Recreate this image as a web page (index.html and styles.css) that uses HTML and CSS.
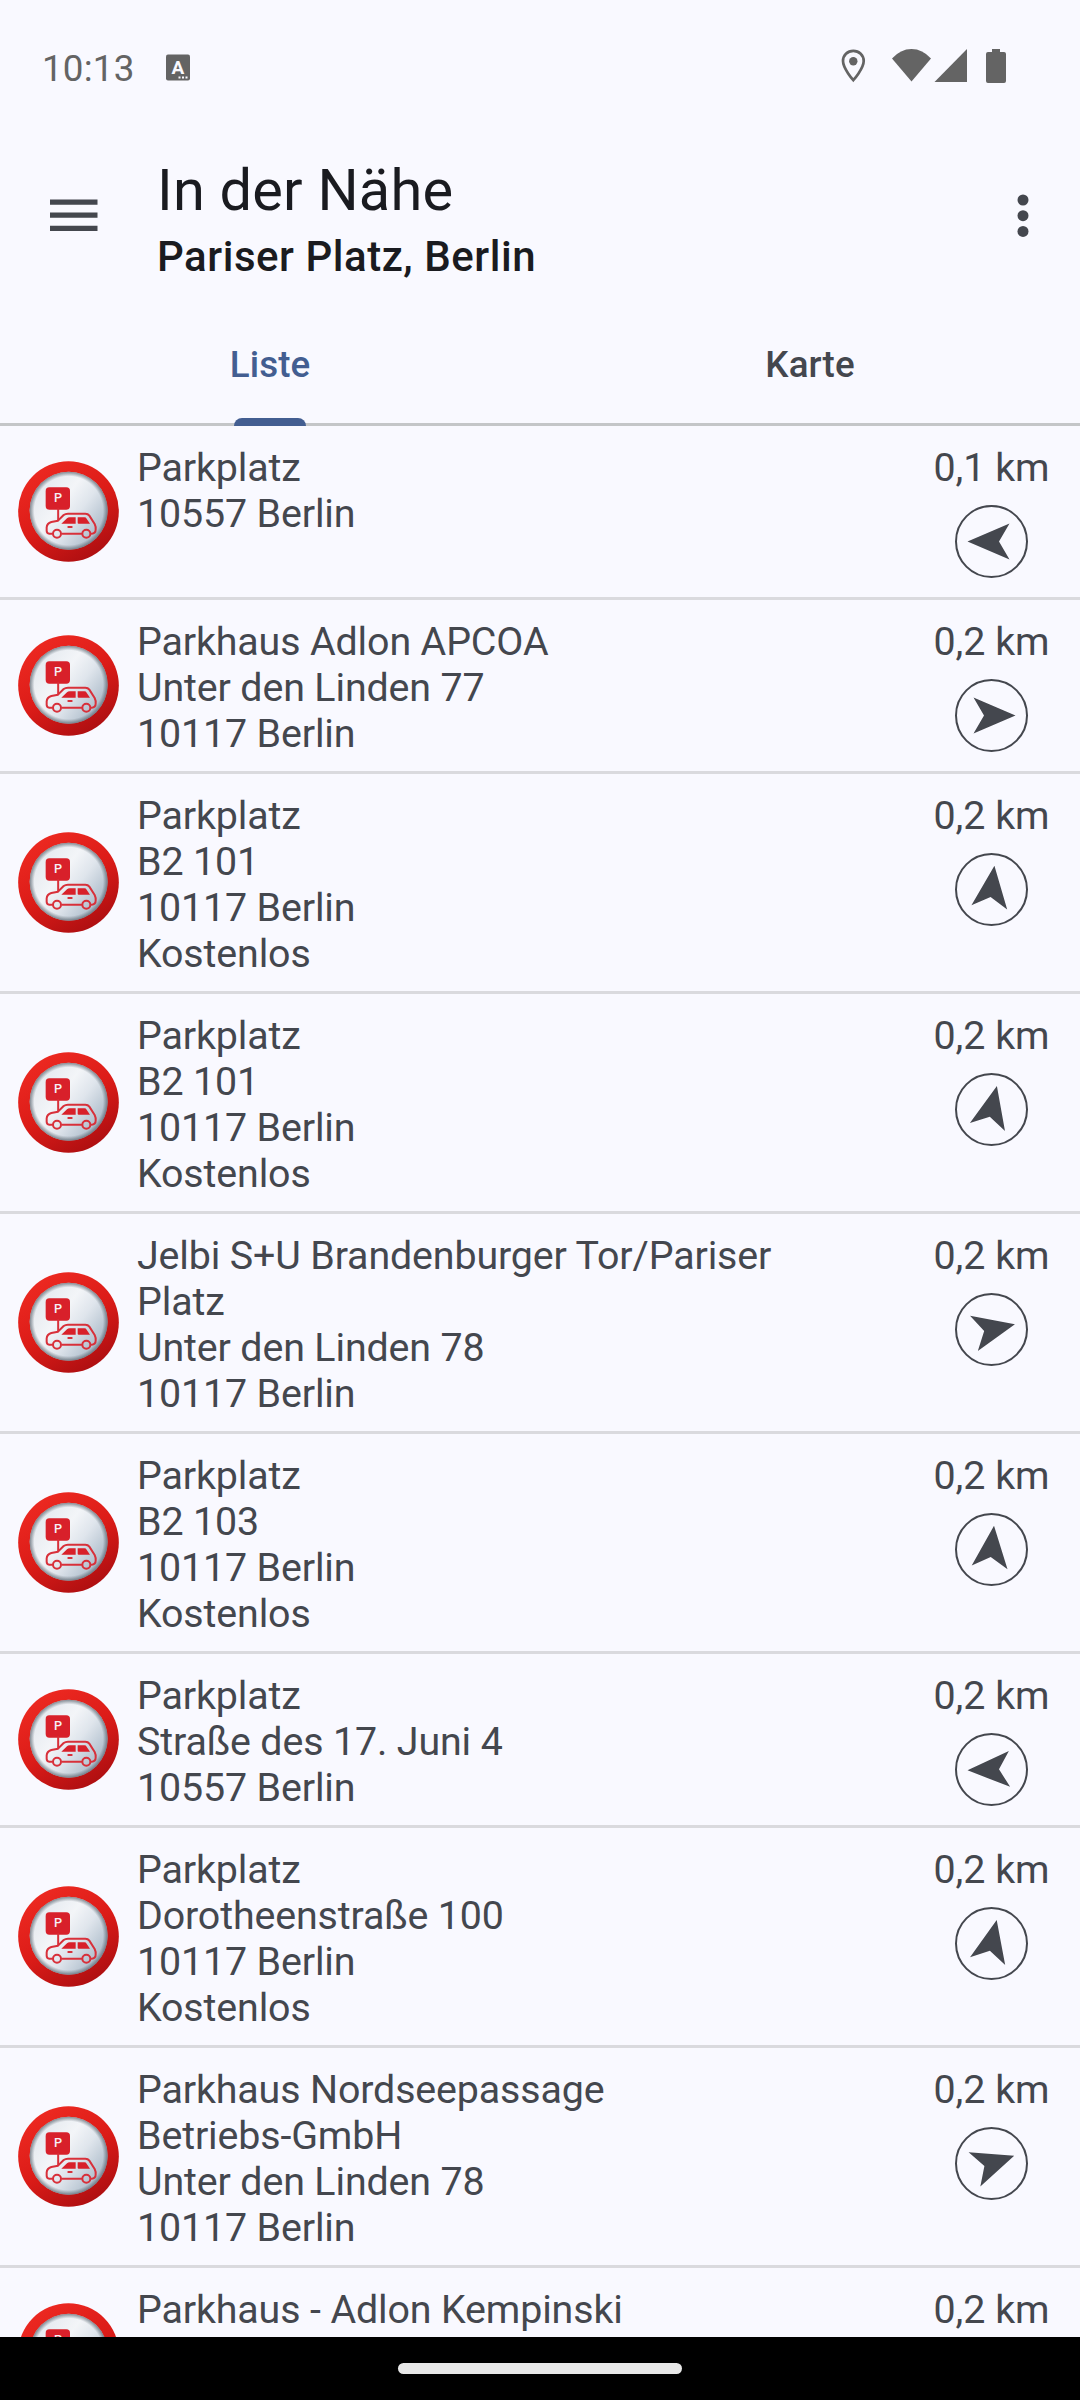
FILE: index.html
```html
<!DOCTYPE html>
<html lang="de">
<head>
<meta charset="utf-8">
<title>In der Nähe</title>
<link rel="stylesheet" href="styles.css">
</head>
<body>
<svg class="defs" width="0" height="0" aria-hidden="true">
  <defs>
    <linearGradient id="ring" x1="0.2" y1="0" x2="0.8" y2="1">
      <stop offset="0" stop-color="#ee2a22"/>
      <stop offset="0.5" stop-color="#dc1c18"/>
      <stop offset="1" stop-color="#a80d10"/>
    </linearGradient>
    <linearGradient id="face" x1="0.1" y1="0.15" x2="0.9" y2="0.75">
      <stop offset="0" stop-color="#e3e8ee"/>
      <stop offset="0.4" stop-color="#f3f5f8"/>
      <stop offset="0.65" stop-color="#dfe5ec"/>
      <stop offset="1" stop-color="#aebdcb"/>
    </linearGradient>
    <radialGradient id="shade">
      <stop offset="0.88" stop-color="#5b6670" stop-opacity="0"/>
      <stop offset="1" stop-color="#5b6670" stop-opacity="0.75"/>
    </radialGradient>
    <symbol id="parking" viewBox="54 63 303 303">
      <circle cx="205.500" cy="214.500" r="151" fill="url(#ring)"/>
      <circle cx="206" cy="212" r="117" fill="url(#face)"/>
      <circle cx="206" cy="212" r="117" fill="url(#shade)"/>
      <rect x="137" y="142" width="73" height="67" rx="11" fill="#d8202a"/>
      <text x="174" y="187" class="sign-letter">P</text>
      <g fill="none" stroke="#d8303a" stroke-width="6" stroke-linejoin="round" stroke-linecap="round">
        <path d="M174.500 208V241"/>
        <path d="M156 281H148Q140 280 140 272V262Q141 250 154 246L174 242L191 225Q196 221 204 221H256Q264 221 268 227L284 252Q288 260 287 269Q287 280 275 281"/>
        <path d="M187 281H244"/>
        <circle cx="171" cy="281" r="12"/>
        <circle cx="259" cy="281" r="12"/>
        <path d="M205 261H215"/>
      </g>
      <path d="M184 251L201 235Q204 232 209 232H227V251ZM233 232H253Q258 232 260 236L270 251H236Q233 251 233 248Z" fill="#d8202a"/>
    </symbol>
    <symbol id="arrow" viewBox="-36.500 -36.500 73 73">
      <path d="M0 -24L18 18L0 7.500L-18 18Z" fill="#44474e"/>
    </symbol>
  </defs>
</svg>

<div class="screen">
  <div class="status">
    <span class="clock">10:13</span>
    <svg class="badge" width="24" height="27" viewBox="0 0 24 27">
      <rect x="0" y="0.500" width="24" height="26" rx="2" fill="#646464"/>
      <text x="12" y="19.500" class="badge-letter">A</text>
      <path d="M12.500 22.500h2v2h-2zM16 22.500h2v2h-2zM19.500 22.500h2v2h-2z" fill="#f9f9ff"/>
    </svg>
    <svg class="system" width="166" height="36" viewBox="841 48 166 36">
      <path d="M853.300 50.900C847.500 50.900 843 55.300 843 61C843 68.500 853.300 80.200 853.300 80.200S863.700 68.500 863.700 61C863.700 55.300 859.100 50.900 853.300 50.900Z" fill="none" stroke="#646464" stroke-width="2.700"/>
      <circle cx="853.300" cy="61.300" r="4.200" fill="#646464"/>
      <path d="M892 58.500Q900.500 49 911.500 49T931 58.500L911.500 81.500Z" fill="#646464"/>
      <path d="M967 49V82H934.500Z" fill="#646464"/>
      <path d="M992 49H1000V52H1004Q1006 52 1006 54V81Q1006 83 1004 83H988Q986 83 986 81V54Q986 52 988 52H992Z" fill="#646464"/>
    </svg>
  </div>

  <header class="appbar">
    <svg class="menu" width="48" height="33" viewBox="0 0 48 33">
      <path d="M0 0.500h47.500v5.250H0zM0 13.600h47.500v5.250H0zM0 26.700h47.500v5.250H0z" fill="#44474e"/>
    </svg>
    <div class="titles">
      <h1>In der Nähe</h1>
      <h2>Pariser Platz, Berlin</h2>
    </div>
    <svg class="more" width="12" height="44" viewBox="0 0 12 44">
      <g fill="#44474e"><circle cx="6" cy="6" r="5.500"/><circle cx="6" cy="21.700" r="5.500"/><circle cx="6" cy="37.400" r="5.500"/></g>
    </svg>
  </header>

  <nav class="tabs">
    <div class="tab active"><span>Liste</span></div>
    <div class="tab"><span>Karte</span></div>
  </nav>

  <main class="list">
    <div class="row"><svg class="icon"><use href="#parking"/></svg><p class="text">Parkplatz<br>10557 Berlin</p><div class="distance"><span>0,1 km</span><div class="compass"><svg style="transform:rotate(-90deg)"><use href="#arrow"/></svg></div></div></div>
    <div class="row"><svg class="icon"><use href="#parking"/></svg><p class="text">Parkhaus Adlon APCOA<br>Unter den Linden 77<br>10117 Berlin</p><div class="distance"><span>0,2 km</span><div class="compass"><svg style="transform:rotate(90deg)"><use href="#arrow"/></svg></div></div></div>
    <div class="row"><svg class="icon"><use href="#parking"/></svg><p class="text">Parkplatz<br>B2 101<br>10117 Berlin<br>Kostenlos</p><div class="distance"><span>0,2 km</span><div class="compass"><svg style="transform:rotate(7deg)"><use href="#arrow"/></svg></div></div></div>
    <div class="row"><svg class="icon"><use href="#parking"/></svg><p class="text">Parkplatz<br>B2 101<br>10117 Berlin<br>Kostenlos</p><div class="distance"><span>0,2 km</span><div class="compass"><svg style="transform:rotate(13deg)"><use href="#arrow"/></svg></div></div></div>
    <div class="row"><svg class="icon"><use href="#parking"/></svg><p class="text">Jelbi S+U Brandenburger Tor/Pariser<br>Platz<br>Unter den Linden 78<br>10117 Berlin</p><div class="distance"><span>0,2 km</span><div class="compass"><svg style="transform:rotate(77.500deg)"><use href="#arrow"/></svg></div></div></div>
    <div class="row"><svg class="icon"><use href="#parking"/></svg><p class="text">Parkplatz<br>B2 103<br>10117 Berlin<br>Kostenlos</p><div class="distance"><span>0,2 km</span><div class="compass"><svg style="transform:rotate(6deg)"><use href="#arrow"/></svg></div></div></div>
    <div class="row"><svg class="icon"><use href="#parking"/></svg><p class="text">Parkplatz<br>Straße des 17. Juni 4<br>10557 Berlin</p><div class="distance"><span>0,2 km</span><div class="compass"><svg style="transform:rotate(-92deg)"><use href="#arrow"/></svg></div></div></div>
    <div class="row"><svg class="icon"><use href="#parking"/></svg><p class="text">Parkplatz<br>Dorotheenstraße 100<br>10117 Berlin<br>Kostenlos</p><div class="distance"><span>0,2 km</span><div class="compass"><svg style="transform:rotate(12.500deg)"><use href="#arrow"/></svg></div></div></div>
    <div class="row"><svg class="icon"><use href="#parking"/></svg><p class="text">Parkhaus Nordseepassage<br>Betriebs-GmbH<br>Unter den Linden 78<br>10117 Berlin</p><div class="distance"><span>0,2 km</span><div class="compass"><svg style="transform:rotate(71deg)"><use href="#arrow"/></svg></div></div></div>
    <div class="row"><svg class="icon"><use href="#parking"/></svg><p class="text">Parkhaus - Adlon Kempinski</p><div class="distance"><span>0,2 km</span></div></div>
  </main>

  <footer class="navbar"><div class="pill"></div></footer>
</div>
</body>
</html>
```
FILE: styles.css
```css
* { box-sizing: border-box; }
body { margin: 0; background: #f9f9ff; font-family: Roboto, sans-serif; color: #44474e; }
h1, h2, p { margin: 0; }
.defs { display: block; }
.screen { width: 1080px; height: 2400px; display: flex; flex-direction: column; overflow: hidden; }

.status { height: 136px; padding: 0 73px 4px 42px; display: flex; align-items: center; flex: none; color: #646464; }
.clock { font-size: 36.75px; letter-spacing: 0.2px; width: 124px; line-height: 44px; margin-top: 5px; }
.badge { display: block; margin-top: 2px; }
.badge-letter { font: 700 19px Roboto, sans-serif; fill: #f9f9ff; text-anchor: middle; }
.system { margin-left: auto; }

.appbar { height: 158px; padding: 20px 51px 0 50px; display: flex; align-items: flex-start; flex: none; color: #1a1b20; }
.menu { margin-top: 43px; }
.titles { margin-left: 59px; }
h1 { font-size: 57.75px; font-weight: 400; line-height: 68px; letter-spacing: 0.2px; }
h2 { font-size: 42px; font-weight: 500; line-height: 50px; margin-top: 8px; letter-spacing: 0.53px; }
.more { margin: 38px 0 0 auto; }

.tabs { height: 132px; display: flex; flex: none; border-bottom: 3px solid #c4c6c8; }
.tab { flex: 1; display: flex; justify-content: center; position: relative; padding-top: 49px; font-size: 36.75px; font-weight: 500; line-height: 44px; letter-spacing: 0.1px; }
.active { color: #435e91; }
.active::after { content: ""; position: absolute; left: 234px; bottom: -3px; width: 72px; height: 8px; border-radius: 8px 8px 0 0; background: #435e91; }

.list { flex: 1; min-height: 0; overflow: hidden; }
.row { min-height: 174px; padding: 19px 29px 14px 18px; border-bottom: 3px solid #dadade; display: flex; align-items: center; }
.icon { width: 101px; height: 101px; flex: none; margin-top: -5px; }
.sign-letter { font: 500 38px Roboto, sans-serif; fill: #f6f1f4; text-anchor: middle; }
.text { align-self: flex-start; margin-left: 18px; flex: 1; font-size: 39.375px; line-height: 46px; letter-spacing: -0.13px; }
.distance { align-self: flex-start; width: 119px; font-size: 39.375px; line-height: 46px; display: flex; flex-direction: column; align-items: center; white-space: nowrap; }
.compass { width: 73px; height: 73px; margin-top: 14px; margin-bottom: -10px; border: 2px solid #44474e; border-radius: 50%; display: flex; align-items: center; justify-content: center; }
.compass svg { width: 73px; height: 73px; flex: none; }

.navbar { height: 63px; flex: none; background: #000; display: flex; justify-content: center; padding-top: 26px; }
.pill { width: 284px; height: 11px; border-radius: 6px; background: #e8e8e8; }
```
